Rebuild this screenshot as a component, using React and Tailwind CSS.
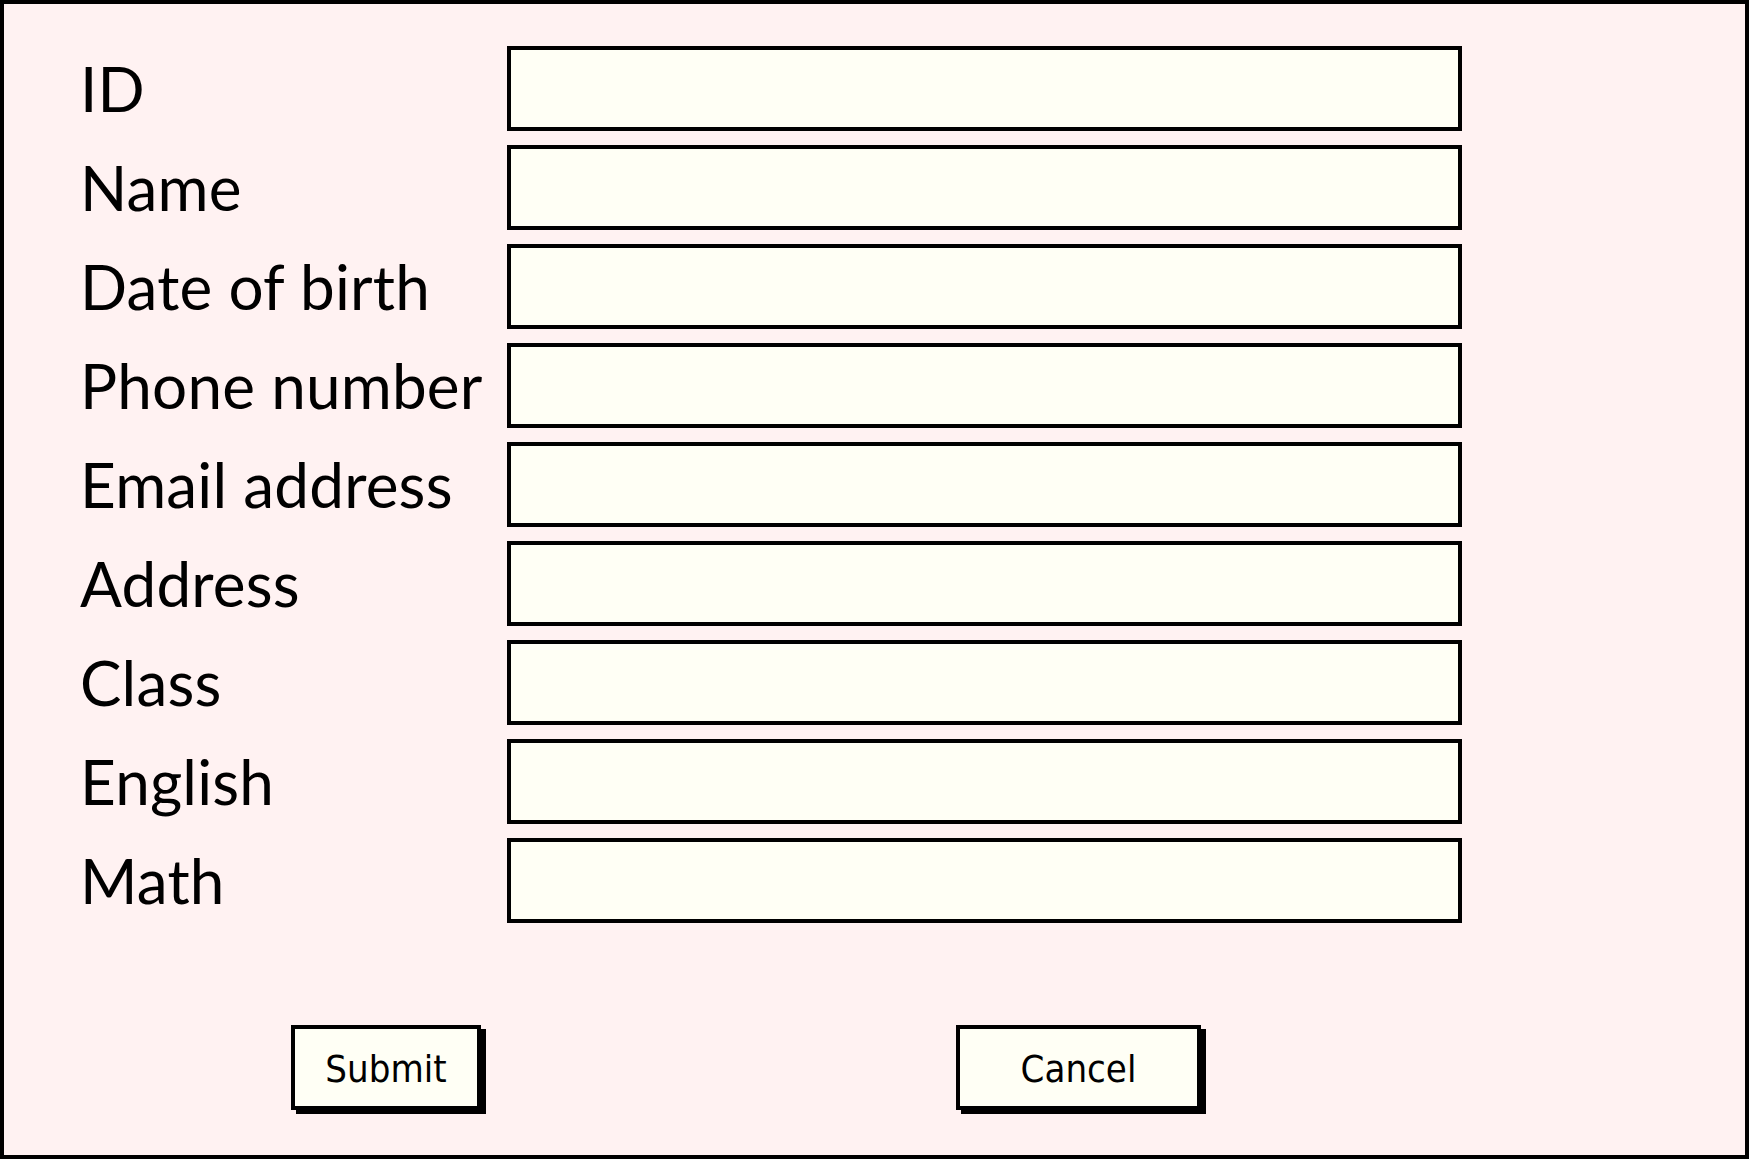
import React from "react";

const fields = [
  "ID",
  "Name",
  "Date of birth",
  "Phone number",
  "Email address",
  "Address",
  "Class",
  "English",
  "Math",
];

export default function App() {
  return (
    <div className="w-[1749px] h-[1159px] border-4 border-black bg-[#fff2f2] flex flex-col text-black">
      <div className="pt-[42px] pl-[76px] grid grid-cols-[427px_955px] gap-y-[14px]">
        {fields.map((f) => (
          <React.Fragment key={f}>
            <label className="h-[85px] flex items-center text-[62px] leading-[1.2] font-['Lato',sans-serif] tracking-[0.2px] whitespace-nowrap">
              {f}
            </label>
            <input
              type="text"
              className="h-[85px] w-[955px] border-4 border-black bg-[#fffff5] outline-none"
            />
          </React.Fragment>
        ))}
      </div>
      <div className="mt-[102px] pl-[287px] flex">
        <button className="w-[190px] h-[85px] border-4 border-black bg-[#fffff5] shadow-[5px_4px_0_#000] text-[38px] pt-[4px] font-['DejaVu_Sans_Condensed','DejaVu_Sans',sans-serif] font-stretch-condensed flex items-center justify-center">
          Submit
        </button>
        <button className="ml-[475px] w-[245px] h-[85px] border-4 border-black bg-[#fffff5] shadow-[5px_4px_0_#000] text-[38px] pt-[4px] font-['DejaVu_Sans_Condensed','DejaVu_Sans',sans-serif] font-stretch-condensed flex items-center justify-center">
          Cancel
        </button>
      </div>
    </div>
  );
}
